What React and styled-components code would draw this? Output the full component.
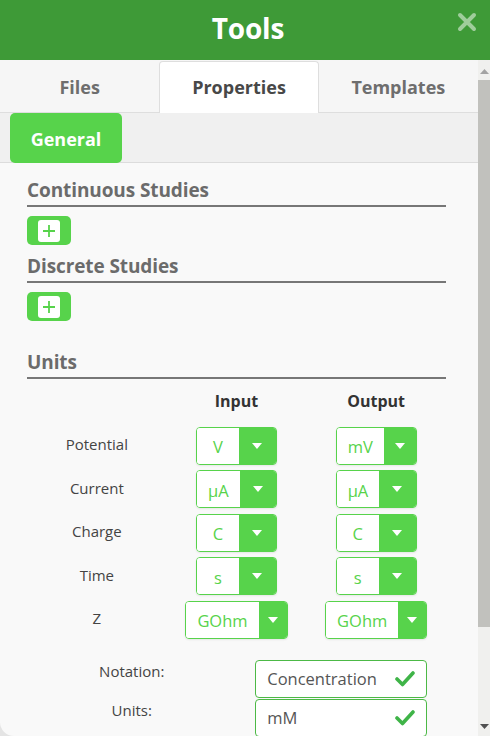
import styled, { createGlobalStyle } from "styled-components";

const GlobalStyle = createGlobalStyle`
    html, body {
        margin: 0;
        padding: 0;
        background: #e4e4e4;
        font-family: "Open Sans", "Noto Sans", sans-serif;
    }
    * { box-sizing: border-box; }
`;

const units = [
    { label: "Potential", input: "V", output: "mV" },
    { label: "Current", input: "µA", output: "µA" },
    { label: "Charge", input: "C", output: "C" },
    { label: "Time", input: "s", output: "s" },
    { label: "Z", input: "GOhm", output: "GOhm" },
];

export default function App() {
    return <Panel>
        <GlobalStyle />
        <Header>
            <Title>Tools</Title>
            <CloseButton aria-label="close">
                <svg width="20" height="20" viewBox="0 0 20 20">
                    <path d="M3 3 L17 17 M17 3 L3 17" stroke="currentColor" strokeWidth="4" strokeLinecap="round" />
                </svg>
            </CloseButton>
        </Header>
        <Body>
            <Scroller>
                <TabBar>
                    <Tab>Files</Tab>
                    <Tab $active>Properties</Tab>
                    <Tab>Templates</Tab>
                </TabBar>
                <SubBar>
                    <SubTab>General</SubTab>
                </SubBar>
                <Content>
                    <SectionTitle>Continuous Studies</SectionTitle>
                    <AddButton><PlusIcon /></AddButton>
                    <SectionTitle>Discrete Studies</SectionTitle>
                    <AddButton><PlusIcon /></AddButton>
                    <SectionTitle $spaced>Units</SectionTitle>
                    <UnitGrid>
                        <span />
                        <ColHead>Input</ColHead>
                        <ColHead>Output</ColHead>
                        {units.map((u) => <UnitRow key={u.label} {...u} />)}
                    </UnitGrid>
                    <FieldGrid>
                        <FieldLabel>Notation:</FieldLabel>
                        <Field><span>Concentration</span><Check /></Field>
                        <FieldLabel>Units:</FieldLabel>
                        <Field><span>mM</span><Check /></Field>
                    </FieldGrid>
                </Content>
            </Scroller>
            <ScrollTrack>
                <ScrollArrow>
                    <svg width="9" height="5" viewBox="0 0 9 5"><polygon points="0,5 9,5 4.5,0" fill="#a3a3a3" /></svg>
                </ScrollArrow>
                <ScrollThumb />
                <ScrollArrow $bottom>
                    <svg width="9" height="5" viewBox="0 0 9 5"><polygon points="0,0 9,0 4.5,5" fill="#505050" /></svg>
                </ScrollArrow>
            </ScrollTrack>
        </Body>
    </Panel>
}

function UnitRow({ label, input, output }) {
    return <>
        <RowLabel>{label}</RowLabel>
        <Cell><Select value={input} /></Cell>
        <Cell><Select value={output} /></Cell>
    </>
}

function Select({ value }) {
    return <SelectBox>
        <SelectValue>{value}</SelectValue>
        <SelectArrow>
            <svg width="10" height="6" viewBox="0 0 10 6"><polygon points="0,0 10,0 5,6" fill="white" /></svg>
        </SelectArrow>
    </SelectBox>
}

function PlusIcon() {
    return <PlusBox>
        <svg width="14" height="14" viewBox="0 0 14 14">
            <path d="M7 1 V13 M1 7 H13" stroke="#57d34b" strokeWidth="1.8" />
        </svg>
    </PlusBox>
}

function Check() {
    return <svg width="20" height="16" viewBox="0 0 20 16">
        <polyline points="2,8 7.5,13.5 18,2" fill="none" stroke="#3fb448" strokeWidth="3.6" strokeLinecap="round" strokeLinejoin="round" />
    </svg>
}

const Panel = styled.div`
    width: 490px;
    height: 736px;
    display: flex;
    flex-direction: column;
    background: #f9f9f9;
    border-bottom-left-radius: 14px;
    overflow: hidden;
`;

const Header = styled.div`
    height: 60px;
    flex: none;
    background: #3e9a37;
    display: flex;
    align-items: center;
    justify-content: center;
    position: relative;
`;

const Title = styled.h1`
    margin: 0 0 4px 6px;
    color: white;
    font-size: 28px;
    font-weight: 700;
    letter-spacing: -0.2px;
`;

const CloseButton = styled.button`
    position: absolute;
    right: 13px;
    top: 12px;
    border: none;
    background: none;
    padding: 0;
    color: rgba(255, 255, 255, 0.5);
    display: flex;
`;

const Body = styled.div`
    flex: 1;
    min-height: 0;
    display: flex;
`;

const Scroller = styled.div`
    flex: 1;
    min-width: 0;
    overflow: hidden;
`;

const ScrollTrack = styled.div`
    width: 12px;
    flex: none;
    background: #f0f0ee;
    display: flex;
    flex-direction: column;
`;

const ScrollArrow = styled.div`
    height: 18px;
    flex: none;
    display: flex;
    align-items: center;
    justify-content: center;
    margin-top: ${(p) => (p.$bottom ? "auto" : "2px")};
    padding-bottom: ${(p) => (p.$bottom ? "2px" : "0")};
`;

const ScrollThumb = styled.div`
    height: 547px;
    background: #c1c1bd;
`;

const TabBar = styled.div`
    display: flex;
    height: 53px;
    padding-top: 1px;
    background: #f6f6f6;
    border-bottom: 1px solid #dedede;
`;

const Tab = styled.div`
    flex: 1;
    display: flex;
    align-items: center;
    justify-content: center;
    padding-bottom: 1px;
    font-size: 18px;
    font-weight: 700;
    color: ${(p) => (p.$active ? "#484848" : "#6e6e6e")};
    background: ${(p) => (p.$active ? "#ffffff" : "transparent")};
    border: 1px solid ${(p) => (p.$active ? "#dedede" : "transparent")};
    border-bottom: none;
    border-radius: 4px 4px 0 0;
    margin-bottom: -1px;
`;

const SubBar = styled.div`
    height: 50px;
    background: #f0f0f0;
    border-bottom: 1px solid #dcdcdc;
    padding-left: 10px;
`;

const SubTab = styled.div`
    width: 112px;
    height: 50px;
    background: #57d34b;
    border-radius: 5px;
    color: white;
    font-size: 18px;
    font-weight: 700;
    display: flex;
    align-items: center;
    justify-content: center;
    padding-top: 1px;
`;

const Content = styled.div`
    padding: 6px 32px 120px 27px;
`;

const SectionTitle = styled.h2`
    margin: ${(p) => (p.$spaced ? "28px" : "8px")} 0 0;
    font-size: 19px;
    font-weight: 700;
    color: #6b6b6b;
    line-height: 27px;
    border-bottom: 2px solid #777;
    padding-bottom: 1px;
    letter-spacing: -0.1px;
`;

const AddButton = styled.button`
    margin-top: 9px;
    width: 44px;
    height: 29px;
    border: none;
    border-radius: 5px;
    background: #57d34b;
    display: flex;
    align-items: center;
    justify-content: center;
    padding: 0;
`;

const PlusBox = styled.span`
    width: 22px;
    height: 22px;
    background: white;
    border-radius: 3px;
    display: flex;
    align-items: center;
    justify-content: center;
`;

const UnitGrid = styled.div`
    display: grid;
    grid-template-columns: repeat(3, 1fr);
    row-gap: 5.5px;
    margin-top: 11px;
    align-items: center;
    text-align: center;
`;

const ColHead = styled.div`
    font-size: 16px;
    line-height: 22px;
    font-weight: 700;
    color: #333;
    margin-bottom: 9px;
`;

const RowLabel = styled.div`
    font-size: 15px;
    color: #444;
    padding-bottom: 3px;
`;

const Cell = styled.div`
    display: flex;
    justify-content: center;
`;

const SelectBox = styled.div`
    display: flex;
    min-width: 81px;
    height: 38px;
    border: 1px solid #57d34b;
    border-radius: 4px;
    overflow: hidden;
    box-shadow: 0 1px 2px rgba(0, 0, 0, 0.08);
`;

const SelectValue = styled.div`
    background: white;
    color: #57d34b;
    font-size: 16.5px;
    min-width: 42px;
    padding: 2px 11px 0;
    display: flex;
    align-items: center;
    justify-content: center;
`;

const SelectArrow = styled.div`
    flex: 1;
    min-width: 28px;
    background: #57d34b;
    display: flex;
    align-items: center;
    justify-content: center;
`;

const FieldGrid = styled.div`
    display: grid;
    grid-template-columns: 1fr 1fr;
    margin-top: 21px;
    row-gap: 1px;
`;

const FieldLabel = styled.div`
    text-align: center;
    font-size: 15px;
    color: #444;
    padding-top: 1px;
`;

const Field = styled.div`
    justify-self: center;
    width: 172px;
    height: 38px;
    border: 1px solid #4cb946;
    border-radius: 4px;
    background: white;
    display: flex;
    align-items: center;
    justify-content: space-between;
    padding: 0 11px;
    font-size: 16.5px;
    color: #555;
`;
